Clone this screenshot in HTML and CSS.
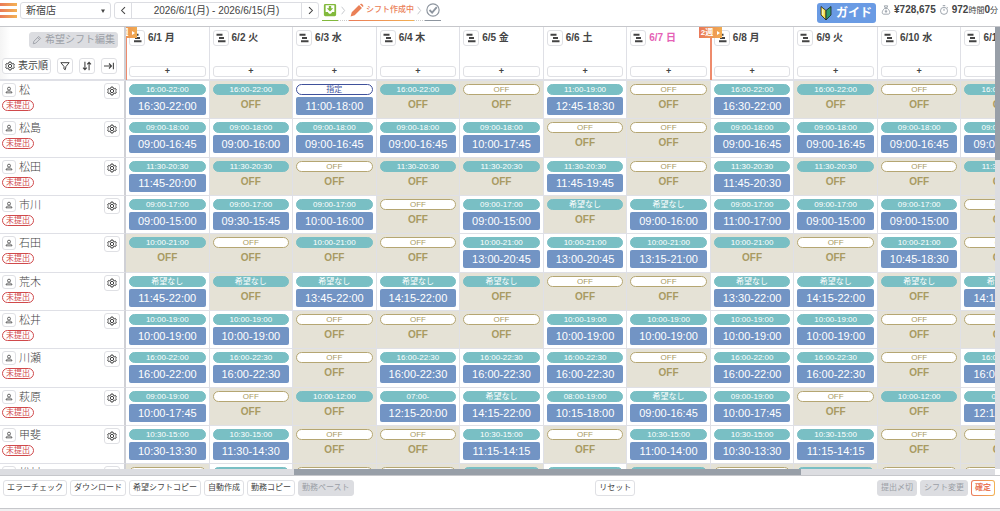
FILE: index.html
```html
<!DOCTYPE html>
<html lang="ja">
<head>
<meta charset="utf-8">
<title>シフト作成</title>
<link rel="stylesheet" href="styles.css">
</head>
<body>
<svg class="defs" aria-hidden="true">
  <symbol id="i-gear" viewBox="0 0 24 24"><path d="M9.6 2.5h4.8l.7 3 2.2 1.2 2.9-.9 2.4 4.1-2.2 2.1 2.2 2.1-2.4 4.1-2.9-.9-2.2 1.2-.7 3H9.6l-.7-3-2.2-1.2-2.9.9-2.4-4.1L3.6 12 1.4 9.9l2.4-4.1 2.9.9 2.2-1.2z" fill="none" stroke="currentColor" stroke-width="2.4" stroke-linejoin="round"/><circle cx="12" cy="12" r="4" fill="none" stroke="currentColor" stroke-width="2.4"/></symbol>
  <symbol id="i-user" viewBox="0 0 24 24"><circle cx="12" cy="8" r="4.5" fill="none" stroke="currentColor" stroke-width="2.4"/><path d="M3 20.5c0-4 4-5.5 9-5.5s9 1.5 9 5.5z" fill="none" stroke="currentColor" stroke-width="2.4" stroke-linejoin="round"/></symbol>
  <symbol id="i-bars" viewBox="0 0 20 20"><path d="M1 3.500h12M6 10h10M4 16.500h15" stroke="currentColor" stroke-width="3.600" fill="none"/></symbol>
  <symbol id="i-pencil" viewBox="0 0 24 24"><path d="M3 21l1.5-6L16 3.5l4.5 4.5L9 19.5zM13.5 6l4.5 4.5" fill="none" stroke="currentColor" stroke-width="2.2" stroke-linejoin="round"/></symbol>
</svg>
<div class="app">
  <header class="topbar">
    <button class="menu" aria-label="メニュー"><span></span><span></span><span></span></button>
    <select class="store" aria-label="店舗"><option>新宿店</option></select>
    <div class="period">
      <button class="step" aria-label="前の期間"><svg class="icon-s" viewBox="0 0 24 24"><path d="M16 3L7 12l9 9" fill="none" stroke="currentColor" stroke-width="2.8"/></svg></button>
      <span class="range">2026/6/1(月) - 2026/6/15(月)</span>
      <button class="step" aria-label="次の期間"><svg class="icon-s" viewBox="0 0 24 24"><path d="M8 3l9 9-9 9" fill="none" stroke="currentColor" stroke-width="2.8"/></svg></button>
    </div>
    <div class="flow">
      <div class="stage stage-done"><svg class="icon-l" viewBox="0 0 24 24"><path fill="#82b93c" fill-rule="evenodd" d="M4 1.5h16a2.5 2.5 0 0 1 2.5 2.5v16a2.5 2.5 0 0 1-2.5 2.5H4A2.5 2.5 0 0 1 1.5 20V4A2.5 2.5 0 0 1 4 1.5zM4.500 4v11.500h4c.4 2 1.700 3 3.500 3s3.100-1 3.500-3h4V4z"/><path fill="#82b93c" d="M10 5h4v4h3.500L12 14.500 6.500 9H10z"/></svg></div>
      <div class="between"><svg class="icon-s" viewBox="0 0 24 24"><path d="M7 2l8 10-8 10" fill="none" stroke="currentColor" stroke-width="2"/></svg></div>
      <div class="stage stage-now"><svg class="icon-l" viewBox="0 0 24 24"><path fill="#ea8057" d="M1 23l2-7L15.500 3.500l5 5L8 21zM17 2.200c1-1.400 2.600-1.400 3.700-.3l1.400 1.400c1.100 1.100 1.100 2.600-.2 3.700z"/></svg><span>シフト作成中</span></div>
      <div class="between"><svg class="icon-s" viewBox="0 0 24 24"><path d="M7 2l8 10-8 10" fill="none" stroke="currentColor" stroke-width="2"/></svg></div>
      <div class="stage stage-next"><svg class="icon-l" viewBox="0 0 24 24"><circle cx="12" cy="12" r="10.5" fill="none" stroke="currentColor" stroke-width="2"/><path d="M6 12l4.500 4.500L18.500 7" fill="none" stroke="currentColor" stroke-width="3.2"/></svg></div>
    </div>
    <button class="guide"><svg class="leaf" viewBox="0 0 24 32"><path fill="#f6df4a" stroke="#222" stroke-width="1.6" d="M2 3l10 8v19L2 20z"/><path fill="#2f9a6c" stroke="#222" stroke-width="1.6" d="M22 3l-10 8v19l10-10z"/><path fill="#fff" d="M4 7l3 2.500v12L4 18.500z" opacity=".6"/></svg>ガイド</button>
    <div class="totals">
      <svg class="icon-m" viewBox="0 0 24 24"><path d="M8 2h8l-2 5h-4zM9 8h6c4 3 6 7 6 10 0 3-2 4-4 4H7c-2 0-4-1-4-4 0-3 2-7 6-10zM12 11v8M9 15h6" fill="none" stroke="currentColor" stroke-width="2"/></svg>
      <b>¥728,675</b>
      <svg class="icon-m" viewBox="0 0 24 24"><circle cx="12" cy="14" r="8.5" fill="none" stroke="currentColor" stroke-width="2"/><path d="M9 1.500h6M12 14V9M19 5l2 2" fill="none" stroke="currentColor" stroke-width="2.2"/></svg>
      <span class="hours"><b>972</b><small>時間</small><b>0</b><small>分</small></span>
    </div>
  </header>

  <main class="board">
    <div class="board-view">
      <table class="shifts">
        <thead>
          <tr id="days">
            <th class="side corner">
              <div class="edit-line"><button class="btn btn-off" disabled><svg class="icon-m" aria-hidden="true"><use href="#i-pencil"/></svg>希望シフト編集</button></div>
              <div class="tools">
                <button class="btn"><svg class="icon-m" aria-hidden="true"><use href="#i-gear"/></svg>表示順</button>
                <button class="btn btn-icon" aria-label="絞り込み"><svg class="icon-m" viewBox="0 0 24 24"><path d="M2 4h20l-7.500 9-2 8-3-2v-6z" fill="none" stroke="currentColor" stroke-width="2.4" stroke-linejoin="round"/></svg></button>
                <button class="btn btn-icon" aria-label="並べ替え"><svg class="icon-m" viewBox="0 0 24 24"><path d="M7 2v19M2.500 16L7 21l4.500-5M17 22V3M12.500 8L17 3l4.500 5" fill="none" stroke="currentColor" stroke-width="2.6"/></svg></button>
                <button class="btn btn-icon" aria-label="右端へ"><svg class="icon-m" viewBox="0 0 24 24"><path d="M0 12h18M12 6l6 6-6 6M22.500 4v16" fill="none" stroke="currentColor" stroke-width="2.6"/></svg></button>
              </div>
            </th>
          </tr>
        </thead>
        <tbody id="staff"></tbody>
      </table>
    </div>
    <div class="vbar"><div class="vthumb"></div></div>
  </main>
  <div class="hbar"><div class="hthumb"></div></div>

  <footer class="actions">
    <div class="group">
      <button class="btn">エラーチェック</button>
      <button class="btn">ダウンロード</button>
      <button class="btn">希望シフトコピー</button>
      <button class="btn">自動作成</button>
      <button class="btn">勤務コピー</button>
      <button class="btn btn-off" disabled>勤務ペースト</button>
    </div>
    <button class="btn">リセット</button>
    <div class="group">
      <button class="btn btn-off" disabled>提出〆切</button>
      <button class="btn btn-off" disabled>シフト変更</button>
      <button class="btn btn-fix">確定</button>
    </div>
  </footer>
</div>
<script src="app.js"></script>
</body>
</html>
```

FILE: styles.css
```css
* { box-sizing: border-box; }

body {
  margin: 0;
  background: #f0f0f1;
  color: #444;
  font-family: "Liberation Sans", "Noto Sans CJK JP", sans-serif;
  font-size: 10px;
  line-height: 12px;
}

button, select { font: inherit; color: inherit; margin: 0; }
svg { display: block; flex: none; }

.defs { position: absolute; width: 0; height: 0; }
.icon-s { width: 9px; height: 9px; }
.icon-m { width: 10px; height: 10px; }
.icon-l { width: 14px; height: 14px; }

.app {
  display: flex;
  flex-direction: column;
  height: calc(100vh - 2px);
  background: #fff;
  border-bottom: 1px solid #c6c7cb;
}

/* top bar */
.topbar {
  display: flex;
  align-items: flex-start;
  height: 27px;
  padding: 2px 2px 0 0;
  border-bottom: 1px solid #c6c7cb;
}

.menu {
  display: flex;
  flex-direction: column;
  gap: 3px;
  width: 17px;
  margin: 1px 3px 0 0;
  padding: 0;
  border: 0;
  background: none;
}
.menu span {
  width: 17px;
  height: 3px;
  background: linear-gradient(90deg, #ea7a58, #f3b254);
}

.store {
  width: 91px;
  height: 17px;
  padding: 0 5px;
  border: 1px solid #dcdde2;
  border-radius: 3px;
  appearance: none;
  background: #fff url("data:image/svg+xml,%3Csvg xmlns='http://www.w3.org/2000/svg' viewBox='0 0 8 8'%3E%3Cpath fill='%23444' d='M0 1h8L4 8z'/%3E%3C/svg%3E") no-repeat right 5px center / 4px 4px;
}

.period {
  display: flex;
  width: 205px;
  height: 17px;
  margin-left: 3px;
  border: 1px solid #dcdde2;
  border-radius: 3px;
}
.step {
  display: flex;
  align-items: center;
  justify-content: center;
  width: 16px;
  padding: 0;
  border: 0;
  background: none;
}
.range {
  flex: 1;
  border: solid #dcdde2;
  border-width: 0 1px;
  line-height: 15px;
  text-align: center;
  white-space: nowrap;
}

.flow { display: flex; margin-left: 3px; }
.stage {
  display: flex;
  align-items: center;
  gap: 2px;
  height: 19px;
  padding: 0 1px 2px;
  border-bottom: 1px solid;
}
.stage-done { border-color: #82b93c; }
.stage-now {
  color: #ea8057;
  font-size: 8px;
  font-weight: 500;
  padding-right: 0;
  border-image: linear-gradient(90deg, #ea7a58, #f3b254) 1;
}
.stage-next { color: #8d959f; }
.between {
  display: flex;
  align-items: center;
  justify-content: center;
  width: 11px;
  padding-bottom: 2px;
  border-bottom: 1px dotted #ccc;
  color: #b5b8bd;
}

.guide {
  display: flex;
  align-items: center;
  gap: 4px;
  height: 20px;
  margin: 1px 5px 0 auto;
  padding: 0 4px 0 3px;
  border: 0;
  border-radius: 3px;
  background: #6a9be4;
  color: #fff;
  font-size: 12px;
  font-weight: 700;
}
.leaf { width: 12px; height: 16px; }

.totals {
  display: flex;
  align-items: center;
  gap: 3px;
  height: 16px;
}
.totals svg { color: #8d959f; }
.totals small { font-size: 8px; }

/* shift board */
.board {
  flex: 1;
  display: flex;
  min-height: 0;
}
.board-view { flex: 1; min-width: 0; overflow: hidden; }

.shifts {
  width: calc(126px + (100% - 126px) * 11 / 10.4);
  table-layout: fixed;
  border-collapse: separate;
  border-spacing: 0;
}
.shifts th, .shifts td { vertical-align: top; }

.side {
  position: relative;
  z-index: 2;
  width: 126px;
  padding: 0;
  background: #fff;
  border-right: 2px solid #cfd0d5;
  border-bottom: 1px solid #dfe0e6;
  font-weight: 400;
  text-align: left;
}
.corner {
  background: linear-gradient(90deg, #f4f4f4, #fff 10px);
  border-bottom-width: 2px;
}

.edit-line {
  display: flex;
  justify-content: flex-end;
  padding: 5px 6px 0 0;
}
.tools {
  display: flex;
  gap: 6px;
  padding: 10px 0 0 2px;
}

.btn {
  display: flex;
  align-items: center;
  justify-content: center;
  gap: 3px;
  height: 16px;
  padding: 0 2px;
  border: 1px solid #dfe0e4;
  border-radius: 3px;
  background: #fff;
  color: #444;
  white-space: nowrap;
}
.btn-icon { width: 16px; padding: 0; }
.btn-off {
  border-color: #dcdde1;
  background: #dcdde1;
  color: #9b9fa6;
}

.day {
  position: relative;
  height: 54px;
  padding: 3px 3px 0;
  border-right: 1px solid #dfe0e6;
  border-bottom: 2px solid #dfe0e6;
  text-align: left;
}
.day-name {
  display: flex;
  align-items: center;
  gap: 3px;
  height: 16px;
}
.day .add {
  width: 100%;
  height: 11px;
  margin-top: 20px;
  font-size: 9px;
  line-height: 9px;
}
.sunday { color: #e561b5; }

.week-start::before {
  content: "";
  position: absolute;
  top: 0;
  bottom: -1px;
  left: -1px;
  width: 2px;
  background: #ee8b6c;
}
.flag {
  position: absolute;
  top: 0;
  left: -12px;
  display: flex;
  align-items: center;
  justify-content: space-between;
  width: 23px;
  height: 11px;
  padding: 0 2px;
  background: linear-gradient(90deg, #e9795a, #f1ac50);
  color: #fff;
  font-size: 8px;
  line-height: 11px;
}
.flag::after {
  content: "";
  border: 2px solid transparent;
  border-left: 3px solid #fff;
  border-right: 0;
}

.cell {
  height: 38px;
  padding: 3px 3px 0;
  border-right: 1px solid #dfe0e6;
  border-bottom: 1px solid #dfe0e6;
  text-align: center;
}
tr:nth-child(3n + 2) > .cell { height: 39px; }
.rest { background: #e5e2d6; }

.wish {
  height: 11px;
  border: 1px solid #79bfc4;
  border-radius: 6px;
  background: #79bfc4;
  color: #fff;
  font-size: 8px;
  line-height: 9px;
  white-space: nowrap;
  overflow: hidden;
}
.wish-off { border-color: #b5a672; background: #fff; color: #a89a62; }
.wish-set { border-color: #3f519b; background: #fff; color: #3f519b; }

.work {
  height: 18px;
  margin-top: 2px;
  border-radius: 2px;
  background: #7294c4;
  color: #fff;
  font-size: 11px;
  line-height: 19px;
  white-space: nowrap;
}
.work-off {
  background: none;
  color: #a89a62;
  font-size: 10px;
  font-weight: 700;
  line-height: 16px;
}

.person {
  display: flex;
  justify-content: space-between;
  padding: 2px 4px 0 2px;
}
.person-name {
  display: flex;
  align-items: center;
  gap: 3px;
  height: 14px;
  font-size: 11px;
  font-weight: 300;
}
.mini { width: 14px; height: 14px; }
.mini .icon-s { width: 8px; height: 8px; }
.status {
  display: inline-block;
  margin-top: 3px;
  padding: 0 3px;
  border: 1px solid #d0494b;
  border-radius: 6px;
  color: #d0494b;
  font-size: 8px;
  line-height: 9px;
}

/* scroll bars */
.vbar { width: 5px; background: #dcdde1; }
.vthumb { height: 30%; background: #989fa8; }
.hbar {
  height: 6px;
  margin-right: 5px;
  background: #dcdde1;
}
.hthumb {
  width: 51%;
  height: 6px;
  margin-left: 29.5%;
  background: #989fa8;
}

/* bottom actions */
.actions {
  display: flex;
  justify-content: space-between;
  height: 33px;
  padding: 4px 5px 0 3px;
  border-top: 1px solid #c6c7cb;
  font-size: 8px;
}
.actions .btn { padding: 0 3px; }
.group { display: flex; gap: 3px; align-items: flex-start; }
.btn-fix {
  border: 1px solid transparent;
  background: linear-gradient(#fff, #fff) padding-box, linear-gradient(90deg, #e9795a, #f3b254) border-box;
  color: #e9795a;
  font-weight: 700;
}
```

FILE: app.js
```js
const days = ["6/1 月", "6/2 火", "6/3 水", "6/4 木", "6/5 金", "6/6 土", "6/7 日", "6/8 月", "6/9 火", "6/10 水", "6/11 木"];
const flags = { 0: "1週", 7: "2週" };

// Each day is "wish/work"; "-" stands for OFF.
const staff = [
  ["松", "16:00-22:00/16:30-22:00 16:00-22:00/- 指定/11:00-18:00 16:00-22:00/- -/- 11:00-19:00/12:45-18:30 -/- 16:00-22:00/16:30-22:00 16:00-22:00/- -/- 16:00-22:00/-"],
  ["松島", "09:00-18:00/09:00-16:45 09:00-18:00/09:00-16:00 09:00-18:00/09:00-16:45 09:00-18:00/09:00-16:45 09:00-18:00/10:00-17:45 -/- -/- 09:00-18:00/09:00-16:45 09:00-18:00/09:00-16:45 09:00-18:00/09:00-16:45 09:00-18:00/09:00-16:45"],
  ["松田", "11:30-20:30/11:45-20:00 11:30-20:30/- -/- 11:30-20:30/- 11:30-20:30/- 11:30-20:30/11:45-19:45 -/- 11:30-20:30/11:45-20:30 11:30-20:30/- -/- 11:30-20:30/-"],
  ["市川", "09:00-17:00/09:00-15:00 09:00-17:00/09:30-15:45 09:00-17:00/10:00-16:00 -/- 09:00-17:00/09:00-15:00 希望なし/- 希望なし/09:00-16:00 09:00-17:00/11:00-17:00 09:00-17:00/09:00-15:00 09:00-17:00/09:00-15:00 -/-"],
  ["石田", "10:00-21:00/- -/- 10:00-21:00/- -/- 10:00-21:00/13:00-20:45 10:00-21:00/13:00-20:45 10:00-21:00/13:15-21:00 10:00-21:00/- -/- 10:00-21:00/10:45-18:30 -/-"],
  ["荒木", "希望なし/11:45-22:00 希望なし/- 希望なし/13:45-22:00 希望なし/14:15-22:00 希望なし/- -/- -/- 希望なし/13:30-22:00 希望なし/14:15-22:00 希望なし/- 希望なし/14:15-22:00"],
  ["松井", "10:00-19:00/10:00-19:00 10:00-19:00/10:00-19:00 -/- -/- -/- 10:00-19:00/10:00-19:00 10:00-19:00/10:00-19:00 10:00-19:00/10:00-19:00 10:00-19:00/10:00-19:00 -/- -/-"],
  ["川瀬", "16:00-22:00/16:00-22:00 16:00-22:30/16:00-22:30 -/- 16:00-22:30/16:00-22:30 16:00-22:30/16:00-22:30 16:00-22:30/16:00-22:30 -/- 16:00-22:00/16:00-22:00 16:00-22:30/16:00-22:30 -/- 16:00-22:00/16:00-22:00"],
  ["萩原", "09:00-19:00/10:00-17:45 -/- 10:00-12:00/- 07:00-/12:15-20:00 希望なし/14:15-22:00 08:00-19:00/10:15-18:00 希望なし/09:00-16:45 09:00-19:00/10:00-17:45 -/- 10:00-12:00/- 07:00-/12:15-20:00"],
  ["甲斐", "10:30-15:00/10:30-13:30 10:30-15:00/11:30-14:30 -/- -/- 10:30-15:00/11:15-14:15 -/- 10:30-15:00/11:00-14:00 10:30-15:00/10:30-13:30 10:30-15:00/11:15-14:15 -/- -/-"],
  ["松村", "-/- 10:00-19:00/10:00-19:00 -/- -/- 10:00-19:00/- 10:00-19:00/10:00-19:00 10:00-19:00/- -/- 10:00-19:00/- -/- -/-"]
];

const icon = (id, size) => `<svg class="${size}" aria-hidden="true"><use href="#${id}"/></svg>`;

document.getElementById("days").insertAdjacentHTML("beforeend", days.map((day, i) => `
  <th class="day${flags[i] ? " week-start" : ""}">
    <div class="day-name${day.endsWith("日") ? " sunday" : ""}"><button class="btn btn-icon bars" aria-label="${day} 表示">${icon("i-bars", "icon-m")}</button>${day}</div>
    <button class="btn add" aria-label="${day} 追加">+</button>
    ${flags[i] ? `<span class="flag">${flags[i]}</span>` : ""}
  </th>`).join(""));

function cell(entry) {
  const [wish, work] = entry.split("/");
  const kind = wish === "-" ? " wish-off" : wish === "指定" ? " wish-set" : "";
  const off = work === "-";
  return `<td class="cell${off ? " rest" : ""}"><div class="wish${kind}">${wish === "-" ? "OFF" : wish}</div><div class="work${off ? " work-off" : ""}">${off ? "OFF" : work}</div></td>`;
}

document.getElementById("staff").innerHTML = staff.map(([name, plan]) => `
  <tr>
    <th class="side" scope="row"><div class="person">
      <div><div class="person-name"><button class="btn btn-icon mini" aria-label="${name} 詳細">${icon("i-user", "icon-s")}</button>${name}</div><span class="status">未提出</span></div>
      <button class="btn btn-icon" aria-label="${name} 設定">${icon("i-gear", "icon-m")}</button>
    </div></th>${plan.split(" ").map(cell).join("")}
  </tr>`).join("");
```
